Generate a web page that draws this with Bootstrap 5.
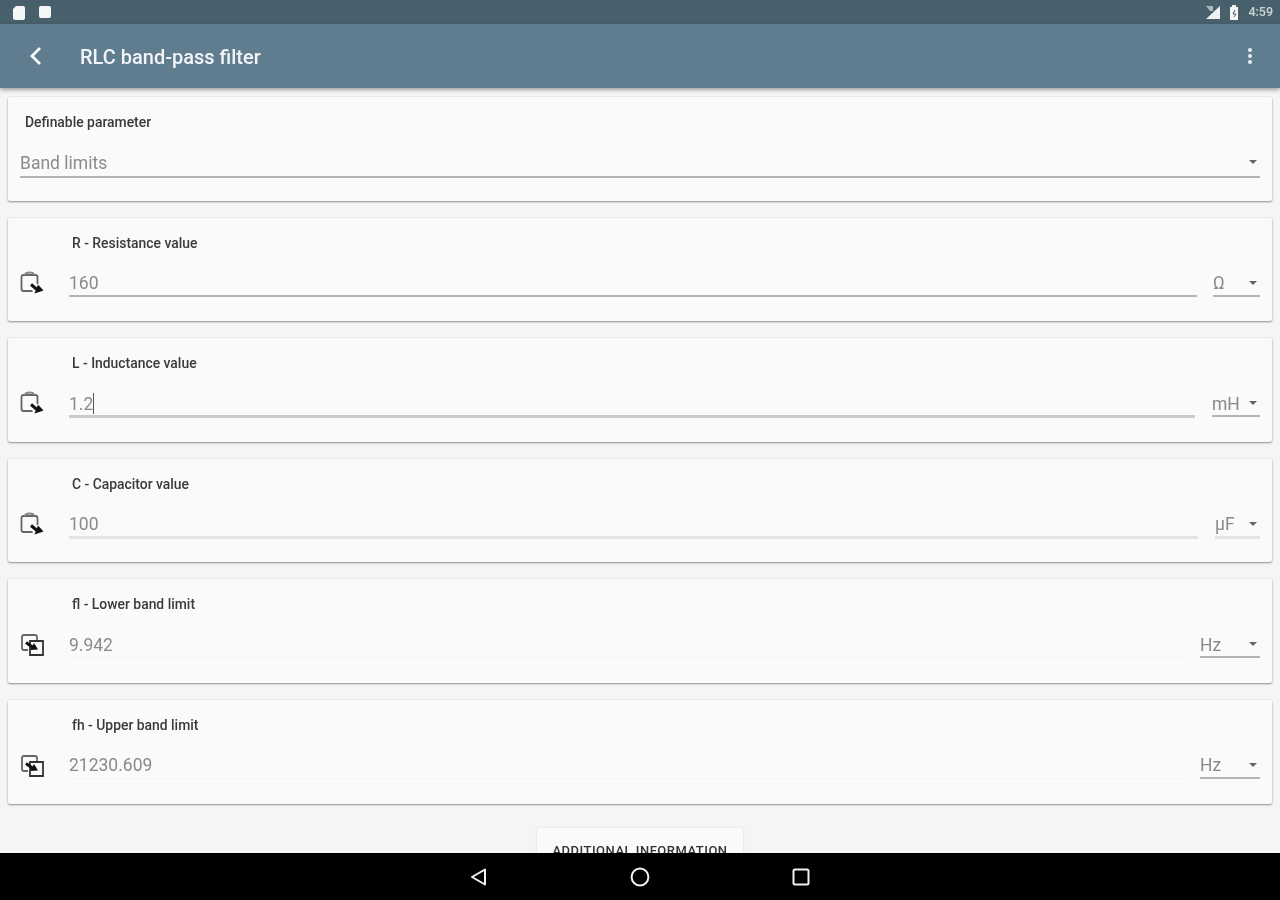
<!DOCTYPE html>
<html lang="en">
<head>
<meta charset="utf-8">
<title>RLC band-pass filter</title>
<link rel="stylesheet" href="https://cdn.jsdelivr.net/npm/bootstrap@5.3.0/dist/css/bootstrap.min.css">
<style>
html,body{height:100%;overflow:hidden}
body{background:#f5f5f5;font-family:Roboto,"Liberation Sans",sans-serif;color:#333}
.app-shell{height:900px;width:1280px}
.status-strip{height:24px;background:#48606b;color:#eef2f4;padding:0 7px 0 12px;flex:none}
.status-time{font-size:12.5px;font-weight:500;opacity:.8}
.app-bar{height:64px;background:#607d8f;color:#f2f5f7;flex:none;padding:0 28px 0 28px;box-shadow:0 2px 4px rgba(0,0,0,.35);position:relative;z-index:2}
.app-title{font-size:20px;font-weight:500;margin-left:36px;line-height:1;padding-top:2px}
.work-area{flex:1 1 auto;min-height:0;overflow:hidden;padding:9px 8px 0}
.calc-panel{background:#fafafa;border-radius:2px;box-shadow:0 1px 2px rgba(0,0,0,.4),0 0 2px rgba(0,0,0,.12);height:103.6px;margin-bottom:17px;padding:18px 12px 0 12px;flex:none}
.field-name{font-size:13.9px;font-weight:500;color:#3a3a3a;line-height:14px;margin-left:52px}
.panel-first .field-name{margin-left:5px}
.field-row{margin-top:16px}
.calc-icon{width:24px;height:24px;flex:none;margin-right:25px;margin-top:5px}
.value-box{flex:1 1 auto;height:31px;font-size:17.5px;line-height:24px;color:#8a8a8a;border-bottom:2px solid #b4b4b4;padding-top:5.5px;position:relative}
.panel-first .value-box{height:33px}
.value-box.line-thick{border-bottom:3px solid #cacaca;height:32px}
.value-box.line-light{border-bottom:3px solid #e4e4e4;height:32px}
.value-box.line-none{border-bottom:1px solid #f3f3f3}
.caret-bar{display:inline-block;width:1px;height:21px;background:#555;vertical-align:-4px}
.unit-box{flex:none;height:31px;font-size:17.5px;line-height:24px;color:#8a8a8a;border-bottom:2px solid #b4b4b4;padding-top:5.5px;margin-left:16px;position:relative;width:47px}
.unit-box.wide{width:60px;margin-left:14px}
.unit-box.roomy{width:48px;margin-left:17px}
.unit-box.slim{width:45px;margin-left:17px;border-bottom:3px solid #e4e4e4;height:32px}
.drop-tip{position:absolute;right:3px;top:15px;width:0;height:0;border-left:4.5px solid transparent;border-right:4.5px solid transparent;border-top:4.5px solid #666}
.info-wrap{padding-top:7px}
.info-btn{width:206px;height:47px;background:#fafafa;border:0;border-radius:2px;box-shadow:0 0 3px rgba(0,0,0,.1);font-size:13px;font-weight:500;color:#333;padding:0;letter-spacing:.5px;line-height:14px;white-space:nowrap}
.nav-strip{height:47px;background:#000;flex:none;position:relative;z-index:2}
.nav-slot{width:161px}
.soft-focus{filter:blur(.5px)}
</style>
</head>
<body>
<div class="app-shell d-flex flex-column soft-focus">
  <div class="status-strip d-flex align-items-center">
    <svg width="14" height="15" viewBox="0 0 14 15"><path d="M4 1h7q2 0 2 2v10q0 2-2 2H3q-2 0-2-2V4z" fill="#f4f6f7"/></svg>
    <svg class="ms-2 ps-1" width="18" height="14" viewBox="0 0 14 14"><path d="M1 3q0-2 2-2h8q2 0 2 2v8q0 2-2 2H3q-2 0-2-2z" fill="#f4f6f7"/></svg>
    <div class="ms-auto d-flex align-items-center">
      <svg width="17" height="16" viewBox="0 0 17 16"><path d="M16 2v13H2z" fill="#eef2f4"/><path d="M2 2l7 0 0 5-3 0z" fill="#a9b6bc"/></svg>
      <svg class="ms-2" width="11" height="16" viewBox="0 0 11 16"><path d="M1 3h2V1h4v2h2v13H1z" fill="#f4f6f7"/><path d="M6 6L4 10h3l-2 3" stroke="#48606b" fill="none"/></svg>
      <span class="status-time ms-2">4:59</span>
    </div>
  </div>
  <div class="app-bar d-flex align-items-center">
    <svg width="16" height="20" viewBox="0 0 16 20"><path d="M12 2L4 10l8 8" fill="none" stroke="#f6f8f9" stroke-width="2.8"/></svg>
    <div class="app-title">RLC band-pass filter</div>
    <svg class="ms-auto" width="4" height="16" viewBox="0 0 4 16"><circle cx="2" cy="2" r="2" fill="#e8eef1"/><circle cx="2" cy="8" r="2" fill="#e8eef1"/><circle cx="2" cy="14" r="2" fill="#e8eef1"/></svg>
  </div>
  <div class="work-area d-flex flex-column">

    <div class="calc-panel panel-first">
      <div class="field-name">Definable parameter</div>
      <div class="field-row d-flex">
        <div class="value-box">Band limits<span class="drop-tip"></span></div>
      </div>
    </div>

    <div class="calc-panel">
      <div class="field-name">R - Resistance value</div>
      <div class="field-row d-flex align-items-start">
        <svg class="calc-icon" viewBox="0 0 24 24"><use href="#ico-input"/></svg>
        <div class="value-box">160</div>
        <div class="unit-box">Ω<span class="drop-tip"></span></div>
      </div>
    </div>

    <div class="calc-panel">
      <div class="field-name">L - Inductance value</div>
      <div class="field-row d-flex align-items-start">
        <svg class="calc-icon" viewBox="0 0 24 24"><use href="#ico-input"/></svg>
        <div class="value-box line-thick">1.2<span class="caret-bar"></span></div>
        <div class="unit-box roomy">mH<span class="drop-tip"></span></div>
      </div>
    </div>

    <div class="calc-panel">
      <div class="field-name">C - Capacitor value</div>
      <div class="field-row d-flex align-items-start">
        <svg class="calc-icon" viewBox="0 0 24 24"><use href="#ico-input"/></svg>
        <div class="value-box line-light">100</div>
        <div class="unit-box slim">µF<span class="drop-tip"></span></div>
      </div>
    </div>

    <div class="calc-panel">
      <div class="field-name">fl - Lower band limit</div>
      <div class="field-row d-flex align-items-start">
        <svg class="calc-icon" viewBox="0 0 24 24"><use href="#ico-output"/></svg>
        <div class="value-box line-none">9.942</div>
        <div class="unit-box wide">Hz<span class="drop-tip"></span></div>
      </div>
    </div>

    <div class="calc-panel">
      <div class="field-name">fh - Upper band limit</div>
      <div class="field-row d-flex align-items-start">
        <svg class="calc-icon" viewBox="0 0 24 24"><use href="#ico-output"/></svg>
        <div class="value-box line-none">21230.609</div>
        <div class="unit-box wide">Hz<span class="drop-tip"></span></div>
      </div>
    </div>

    <div class="info-wrap d-flex justify-content-center">
      <button class="info-btn btn" type="button">ADDITIONAL INFORMATION</button>
    </div>
  </div>
  <div class="nav-strip d-flex align-items-center justify-content-center">
    <div class="nav-slot d-flex justify-content-center">
      <svg width="20" height="20" viewBox="0 0 20 20"><path d="M16 2.500v15L3 10z" fill="none" stroke="#f2f2f2" stroke-width="2" stroke-linejoin="round"/></svg>
    </div>
    <div class="nav-slot d-flex justify-content-center">
      <svg width="20" height="20" viewBox="0 0 20 20"><circle cx="10" cy="10" r="8.400" fill="none" stroke="#f2f2f2" stroke-width="2"/></svg>
    </div>
    <div class="nav-slot d-flex justify-content-center">
      <svg width="18" height="18" viewBox="0 0 18 18"><rect x="1.500" y="1.500" width="15" height="15" rx="1.500" fill="none" stroke="#f2f2f2" stroke-width="2"/></svg>
    </div>
  </div>
</div>
<svg width="0" height="0" class="position-absolute">
  <defs>
    <g id="ico-input">
      <path d="M17.500 13V6q0-2-2-2H3.500q-2 0-2 2v12q0 2 2 2h9" fill="none" stroke="#666" stroke-width="1.800"/>
      <path d="M5 4q0-2.500 4.500-2.500T14 4" fill="none" stroke="#888" stroke-width="1.800"/>
      <path d="M11 13.500l6 5" stroke="#111" stroke-width="3"/>
      <path d="M14.500 22.500l9-3-5.500-6z" fill="#111"/>
    </g>
    <g id="ico-output">
      <path d="M8 18H4q-2 0-2-2V5q0-2 2-2h11q2 0 2 2v4" fill="none" stroke="#666" stroke-width="1.800"/>
      <path d="M10 9h13v14H10z" fill="#fafafa" stroke="#333" stroke-width="1.800"/>
      <path d="M6 10.500l7 5" stroke="#111" stroke-width="3"/>
      <path d="M10 18l8-.5-4-6.500z" fill="#111"/>
    </g>
  </defs>
</svg>
<script src="https://cdn.jsdelivr.net/npm/bootstrap@5.3.0/dist/js/bootstrap.bundle.min.js"></script>
</body>
</html>
